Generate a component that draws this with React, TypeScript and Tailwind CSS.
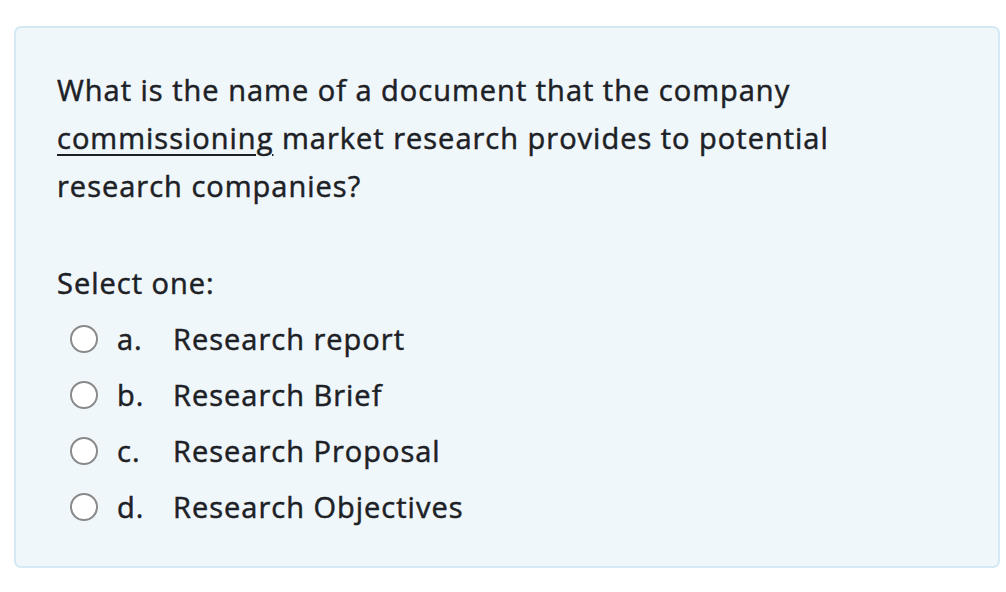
export default function App() {
  const opts = [
    ["a.", "Research report"],
    ["b.", "Research Brief"],
    ["c.", "Research Proposal"],
    ["d.", "Research Objectives"],
  ];
  return (
    <div className="w-[1006px] h-[592px] bg-white pt-[26px] pl-[14px]" style={{ fontFamily: '"Open Sans", sans-serif' }}>
      <div className="w-[986px] h-[542px] rounded-[7px] border-2 border-[#d5e9f4] bg-[#eff7fb] pl-[41px] pt-[38px] text-[#1d2125] tracking-[1px] [-webkit-text-stroke:0.5px_#1d2125]">
        <div className="text-[29px] leading-[48px] w-[820px]">
          What is the name of a document that the company{" "}
          <span className="underline decoration-2 underline-offset-[5px]">commissioning</span> market research provides to potential research companies?
        </div>
        <div className="mt-[49px] text-[29px] leading-[48px]">Select one:</div>
        <div className="mt-[4px] flex flex-col">
          {opts.map(([l, t]) => (
            <div key={l} className="h-[56px] flex items-center">
              <div className="ml-[13px] w-[28px] h-[28px] rounded-full border-2 border-[#8a8a8a] bg-white" />
              <span className="ml-[19px] w-[56px] text-[29px]">{l}</span>
              <span className="text-[29px]">{t}</span>
            </div>
          ))}
        </div>
      </div>
    </div>
  );
}
